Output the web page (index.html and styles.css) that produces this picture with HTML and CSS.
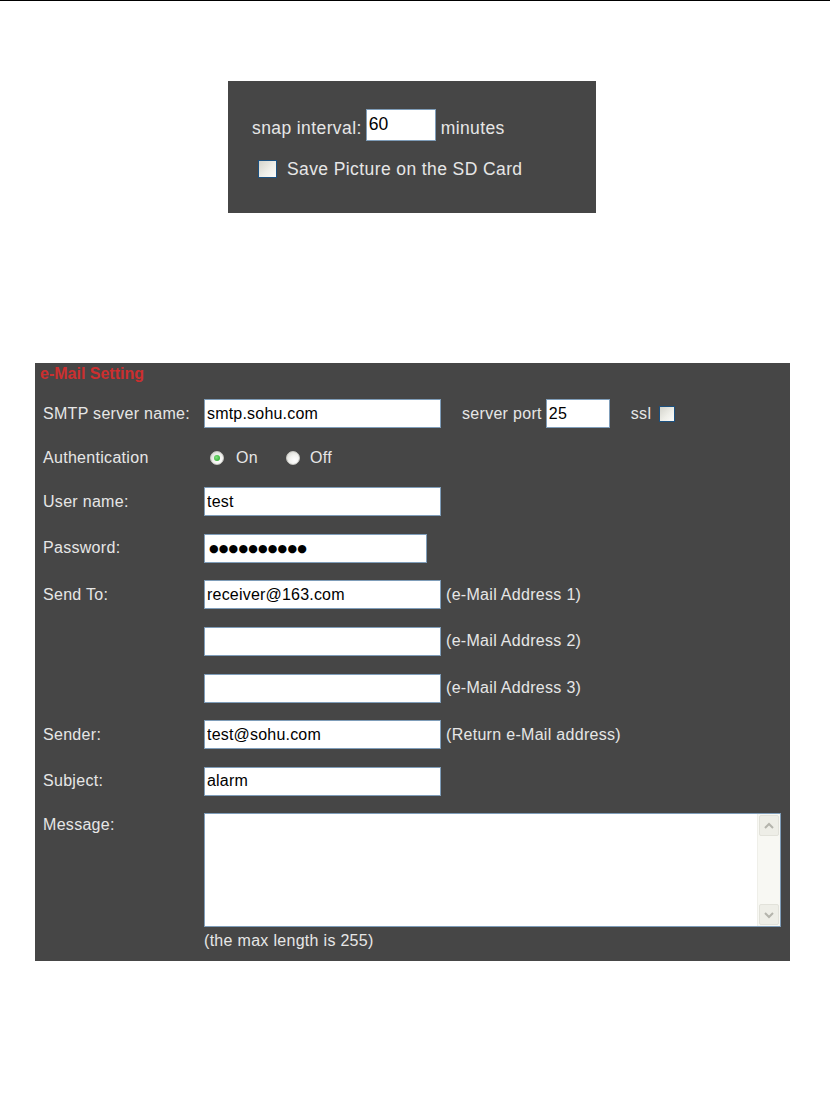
FILE: index.html
```html
<!DOCTYPE html>
<html>
<head>
<meta charset="utf-8">
<link rel="stylesheet" href="styles.css">
</head>
<body>
<div class="topline"></div>

<div class="panel snap">
  <div class="snap-row">
    <span class="txt">snap interval:</span>
    <input class="field f-snap" type="text" value="60">
    <span class="txt">minutes</span>
  </div>
  <div class="sd-row">
    <span class="check big"></span>
    <span class="txt">Save Picture on the SD Card</span>
  </div>
</div>

<div class="panel mail">
  <div class="title">e-Mail Setting</div>
  <div class="rows">
    <div class="row">
      <span class="label">SMTP server name:</span>
      <input class="field f-wide" type="text" value="smtp.sohu.com">
      <span class="txt port-label">server port</span>
      <input class="field f-port" type="text" value="25">
      <span class="txt ssl-label">ssl</span>
      <span class="check small"></span>
    </div>
    <div class="row row-auth">
      <span class="label">Authentication</span>
      <span class="radio on"></span><span class="txt r-on">On</span>
      <span class="radio"></span><span class="txt r-off">Off</span>
    </div>
    <div class="row">
      <span class="label">User name:</span>
      <input class="field f-wide" type="text" value="test">
    </div>
    <div class="row">
      <span class="label">Password:</span>
      <span class="field f-pass"><span class="dots">●●●●●●●●●●</span></span>
    </div>
    <div class="row">
      <span class="label">Send To:</span>
      <input class="field f-wide" type="text" value="receiver@163.com">
      <span class="txt hint">(e-Mail Address 1)</span>
    </div>
    <div class="row">
      <span class="label"></span>
      <input class="field f-wide" type="text" value="">
      <span class="txt hint">(e-Mail Address 2)</span>
    </div>
    <div class="row">
      <span class="label"></span>
      <input class="field f-wide" type="text" value="">
      <span class="txt hint">(e-Mail Address 3)</span>
    </div>
    <div class="row">
      <span class="label">Sender:</span>
      <input class="field f-wide" type="text" value="test@sohu.com">
      <span class="txt hint">(Return e-Mail address)</span>
    </div>
    <div class="row">
      <span class="label">Subject:</span>
      <input class="field f-wide" type="text" value="alarm">
    </div>
    <div class="row row-msg">
      <span class="label msg-label">Message:</span>
      <div class="textarea">
        <div class="ta-body"></div>
        <div class="scrollbar">
          <div class="sb-btn"><svg width="12" height="8" viewBox="0 0 12 8"><path d="M2 6 L6 2 L10 6" fill="none" stroke="#b4b4ac" stroke-width="2"/></svg></div>
          <div class="sb-track"></div>
          <div class="sb-btn"><svg width="12" height="8" viewBox="0 0 12 8"><path d="M2 2 L6 6 L10 2" fill="none" stroke="#b4b4ac" stroke-width="2"/></svg></div>
        </div>
      </div>
    </div>
    <div class="maxlen txt">(the max length is 255)</div>
  </div>
</div>
</body>
</html>
```

FILE: styles.css
```css
html, body {
  margin: 0;
  padding: 0;
  background: #ffffff;
}
body {
  font-family: "Liberation Sans", Arial, sans-serif;
  font-size: 16px;
  color: #e6e6e6;
}
.topline {
  width: 830px;
  height: 1px;
  background: #000;
}
.panel {
  background: #464646;
  box-sizing: border-box;
}
.txt, .label {
  letter-spacing: 0.3px;
  line-height: 20px;
  white-space: nowrap;
}

/* snap panel */
.snap {
  margin: 80px 0 0 228px;
  width: 368px;
  height: 132px;
  padding: 28px 0 0 24px;
  font-size: 17.5px;
}
.snap .txt {
  letter-spacing: 0.4px;
}
.snap-row {
  display: flex;
  align-items: flex-start;
  height: 32px;
}
.snap-row .txt {
  padding-top: 9px;
}
.field {
  box-sizing: border-box;
  border: 1px solid #7f9db9;
  background: #fff;
  color: #000;
  font-family: "Liberation Sans", Arial, sans-serif;
  font-size: 16px;
  letter-spacing: 0.2px;
  padding: 0 2px;
  margin: 0;
  height: 29px;
  outline: none;
}
.f-snap {
  width: 70px;
  height: 32px;
  margin: 0 5px 0 4px;
  font-size: 17.5px;
  padding-top: 0;
  padding-bottom: 1px;
}
.sd-row {
  display: flex;
  align-items: center;
  margin-top: 18px;
  padding-left: 6px;
  gap: 10px;
}
.check {
  box-sizing: border-box;
  border: 1px solid #1c5180;
  background: linear-gradient(135deg, #d4d4cc 0%, #eeeee8 55%, #fbfbf9 100%);
  display: inline-block;
  flex: none;
}
.check.big {
  width: 19px;
  height: 18px;
}
.check.small {
  width: 16px;
  height: 16px;
  margin-left: 8px;
}

/* mail panel */
.mail {
  margin: 150px 0 0 35px;
  width: 755px;
  height: 598px;
  padding: 0 0 0 8px;
}
.title {
  color: #cc2f2f;
  font-weight: bold;
  font-size: 16px;
  line-height: 16px;
  margin-left: -3px;
  padding-top: 3px;
}
.rows {
  margin-top: 17px;
  display: flex;
  flex-direction: column;
  gap: 17.6px;
}
.row {
  display: flex;
  align-items: center;
  height: 29px;
}
.label {
  width: 161px;
  flex: none;
}
.f-wide {
  width: 237px;
}
.f-port {
  width: 64px;
  margin-left: 4px;
}
.port-label {
  margin-left: 21px;
}
.ssl-label {
  margin-left: 21px;
}
.hint {
  margin-left: 5px;
}
.f-pass {
  width: 223px;
  display: flex;
  align-items: center;
}
.dots {
  font-family: "DejaVu Sans", sans-serif;
  font-size: 11px;
  letter-spacing: 0.2px;
  padding-left: 2px;
  line-height: 1;
}
.row-auth {
  height: 24px;
}
.radio {
  box-sizing: border-box;
  width: 14px;
  height: 14px;
  border-radius: 50%;
  border: 1px solid #c9c9c4;
  background: radial-gradient(circle at 65% 70%, #ffffff 0%, #f2f2ef 45%, #d2d2cc 100%);
  display: inline-flex;
  align-items: center;
  justify-content: center;
  margin-left: 6px;
  flex: none;
}
.radio.on::after {
  content: "";
  width: 6px;
  height: 6px;
  border-radius: 50%;
  background: radial-gradient(circle at 40% 40%, #7fe07f, #21a121);
}
.r-on {
  margin-left: 12px;
}
.radio + .r-on + .radio {
  margin-left: 28px;
}
.r-off {
  margin-left: 10px;
}
.row-msg {
  align-items: flex-start;
  height: 114px;
}
.msg-label {
  padding-top: 2px;
}
.textarea {
  box-sizing: border-box;
  width: 577px;
  height: 114px;
  border: 1px solid #7f9db9;
  background: #fff;
  display: flex;
}
.ta-body {
  flex: 1;
}
.scrollbar {
  width: 22px;
  display: flex;
  flex-direction: column;
  background: #f8f8f3;
  border-left: 1px solid #efefe9;
}
.sb-btn {
  height: 21px;
  box-sizing: border-box;
  margin: 1px;
  background: #eeeee7;
  border: 1px solid #e2e2da;
  border-radius: 2px;
  display: flex;
  align-items: center;
  justify-content: center;
}
.sb-track {
  flex: 1;
}
.maxlen {
  margin: -14px 0 0 161px;
}
```
